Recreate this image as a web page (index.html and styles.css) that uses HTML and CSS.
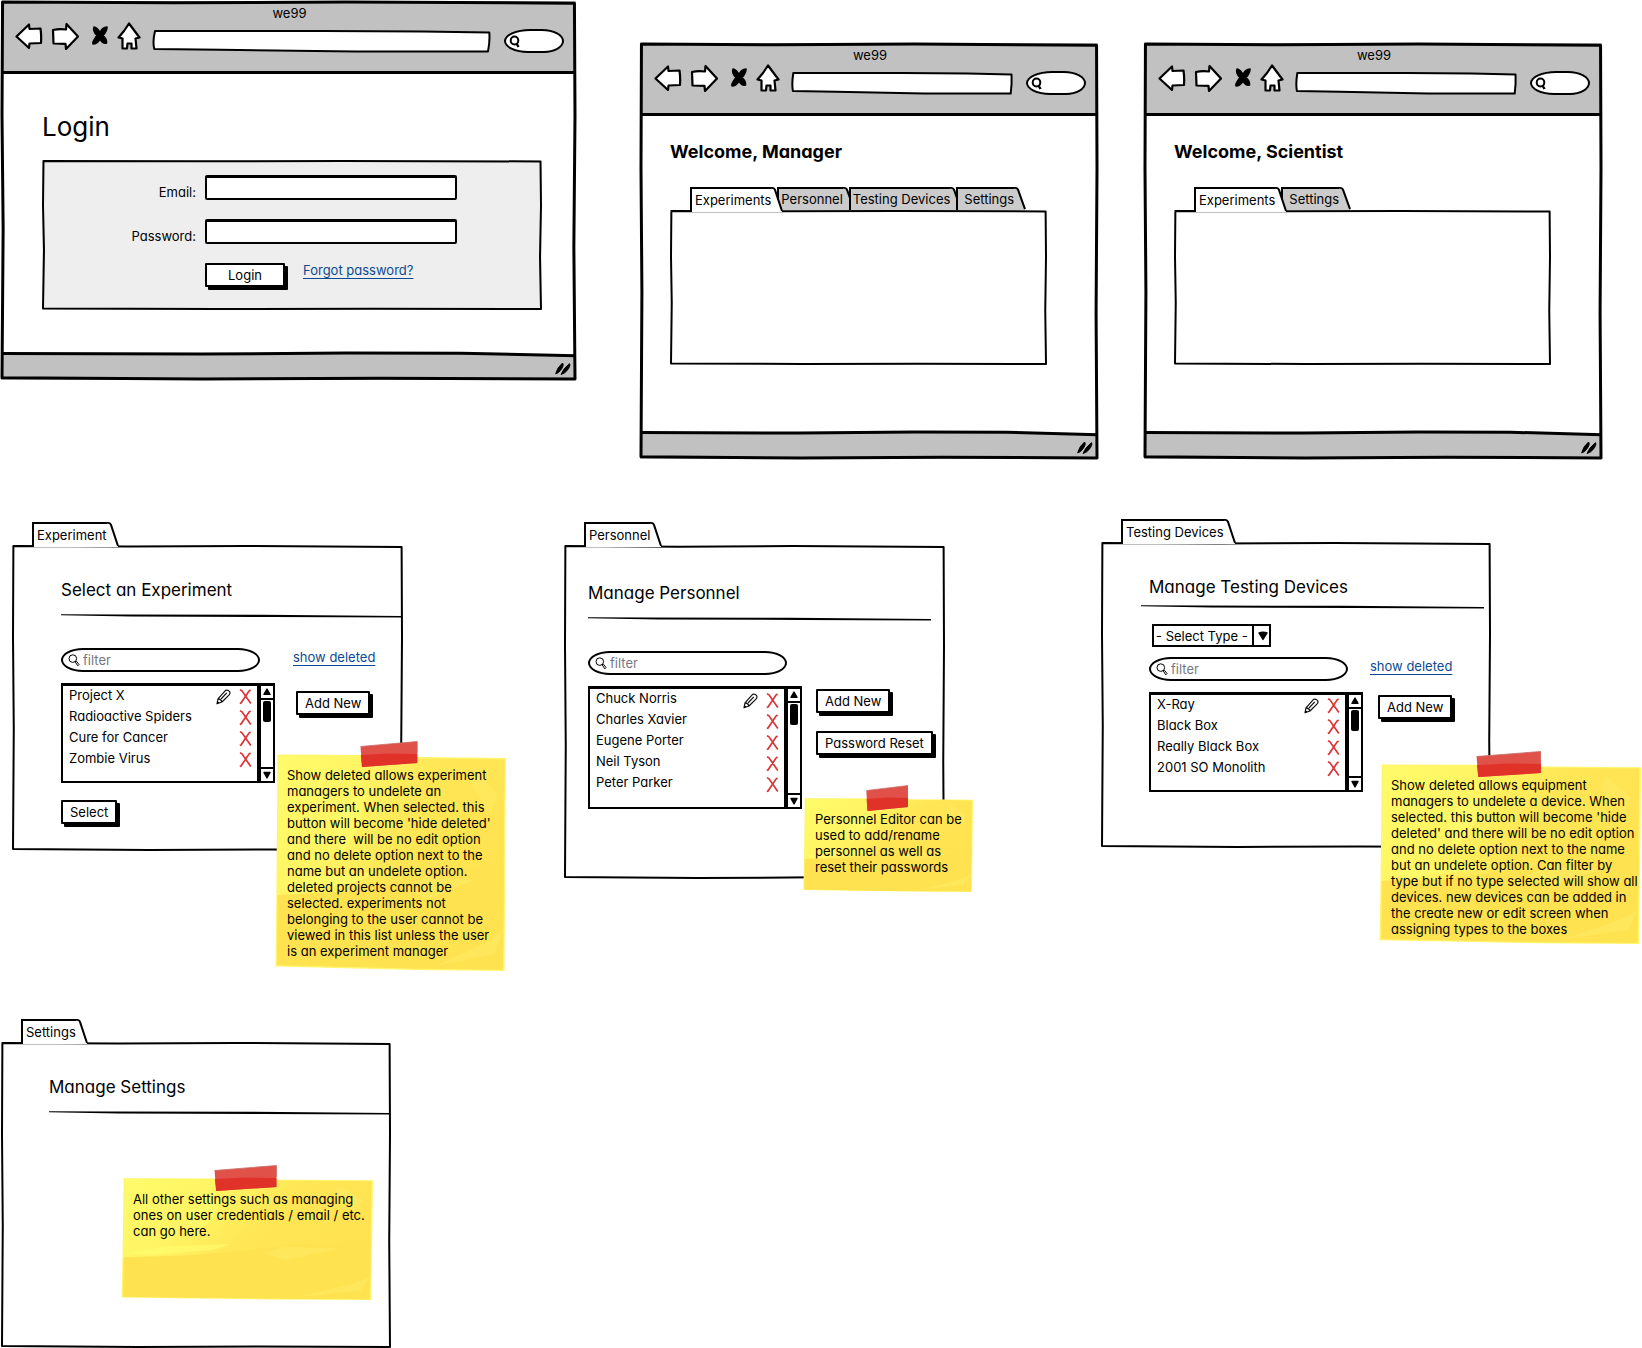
FILE: index.html
```html
<!DOCTYPE html>
<html lang="en">
<head>
<meta charset="utf-8">
<meta name="viewport" content="width=device-width, initial-scale=1">
<title>we99 wireframes</title>
<link rel="stylesheet" href="styles.css">
</head>
<body>
<svg class="defs" width="0" height="0" aria-hidden="true">
  <defs>
    <linearGradient id="paper" x1="0" y1="0" x2="1" y2="0.5">
      <stop offset="0" stop-color="#fffb6a"/>
      <stop offset="0.35" stop-color="#fff463"/>
      <stop offset="0.6" stop-color="#ffe655"/>
      <stop offset="1" stop-color="#ffe250"/>
    </linearGradient>
    <symbol id="frame" viewBox="0 0 100 100" preserveAspectRatio="none">
      <path class="ink" d="M0.1 0 L30 0.2 L60 0 L99.9 0.3 L100 30 L99.8 65 L100 100 L66 99.8 L35 100 L0 99.7 L0.2 60 L0 30 Z"/>
    </symbol>
    <symbol id="address" viewBox="0 0 100 22" preserveAspectRatio="none">
      <path class="ink" d="M0.6 1 L50 1 L80 1.6 L99.800 2.6 Q100 12 99.400 21.6 L60 21.600 L20 19.8 L0.4 19 Q-0.2 12 0.6 1 Z"/>
    </symbol>
    <symbol id="foot" viewBox="0 0 100 27" preserveAspectRatio="none">
      <path d="M0 1.500 L35 2 L60 1 L80 1.2 L100 3.5 V27 H0 Z" fill="#c1c1c1"/>
      <path class="ink" d="M0 1.500 L35 2 L60 1 L80 1.2 L100 3.5"/>
    </symbol>
    <symbol id="rule" viewBox="0 0 340 4" preserveAspectRatio="none">
      <path d="M0 0.3 L60 0.6 L200 0.8 L340 2 V3.6 L210 3 L70 2.4 L0 1.2 Z"/>
    </symbol>
    <symbol id="edge" viewBox="0 0 12 26" preserveAspectRatio="none">
      <path class="edge-fill" d="M0 1 Q3 0.6 4 3 L11 25 V26 H0 Z"/>
      <path d="M0 1 Q3 0.6 4 3 L11 25" fill="none" stroke="#000" stroke-width="2"/>
    </symbol>
    <symbol id="back" viewBox="0 0 28 28">
      <path d="M1.5 14.5 L14 2.5 L14.5 7 L25.5 6.5 Q26.5 13 26 21 L14.5 21.5 L14 26 Z" fill="#fff" stroke="#000" stroke-width="2.2" stroke-linejoin="round"/>
    </symbol>
    <symbol id="forward" viewBox="0 0 28 28">
      <path d="M27 14.5 L15.5 2 L15 7.5 Q8 6.5 2 8 L2.5 21.5 L14.5 21.8 L15 27 Z" fill="#fff" stroke="#000" stroke-width="2.2" stroke-linejoin="round"/>
    </symbol>
    <symbol id="stop" viewBox="0 0 22 28">
      <path d="M7 5 Q11 6 13 11 Q15 5 20 5 Q20 9 16 13.500 Q20 17 19.500 21 Q16 22 13 17 Q10 22 6 22 Q5 20 10 13.500 Q5.500 9 7 5 Z" stroke="#000" stroke-width="1.6" stroke-linejoin="round"/>
    </symbol>
    <symbol id="home" viewBox="0 0 24 28">
      <path d="M12 1.5 L22.5 15.5 L18.5 16.5 L19.5 26.5 H14.5 V21.5 H10.5 L10 26.5 H5.5 L5.5 16.5 L1.5 15.5 L7 9 Z" fill="#fff" stroke="#000" stroke-width="2.2" stroke-linejoin="round"/>
    </symbol>
    <symbol id="lens-bold" viewBox="0 0 12 13">
      <ellipse cx="5.5" cy="5.5" rx="3.8" ry="4" fill="none" stroke="#000" stroke-width="2"/>
      <path d="M7.5 8.5 L9.5 12" stroke="#000" stroke-width="2.4"/>
    </symbol>
    <symbol id="lens" viewBox="0 0 12 13">
      <circle cx="4.8" cy="4.6" r="3.8" fill="none" stroke="#000" stroke-width="1"/>
      <path d="M7 7.6 L8.6 7.4 L11 10.6 L9.8 11.8 Z" fill="none" stroke="#000" stroke-width="1"/>
    </symbol>
    <symbol id="pencil" viewBox="0 0 15 16">
      <path d="M1 14.8 L2 9.8 L9.6 1.4 Q12 0.6 13.6 2.6 Q14.4 4.4 13.4 5.6 L6 13 Z M2 9.8 Q5 10 6 13 M10.800 3.8 L5 10" fill="none" stroke="#111" stroke-width="1.2" stroke-linejoin="round"/>
      <path d="M1 15 L1.6 12.4 L3.6 13.6 Z"/>
    </symbol>
    <symbol id="cross" viewBox="0 0 13 16">
      <path d="M1 0.8 L3 1.8 L11.8 14.6 M11.6 1 L10 2 L2 14 L0.8 14.6" fill="none" stroke="#dc3434" stroke-width="1.7"/>
    </symbol>
    <symbol id="grip" viewBox="0 0 16 14">
      <path d="M0.6 12 Q2 5.5 7.5 1 Q9.4 2.6 6.6 7 Q3.6 11.4 0.6 12 Z M6 12.6 Q7.8 7 14.4 1.6 Q16 3 13 7.6 Q9.4 12 6 12.6 Z" stroke="#000" stroke-width="0.8"/>
    </symbol>
    <symbol id="up" viewBox="0 0 12 12">
      <path d="M6 3 L9 8.400 H3 Z" stroke="#000" stroke-width="1.4" stroke-linejoin="round"/>
    </symbol>
    <symbol id="down" viewBox="0 0 12 12">
      <path d="M6 8.800 L9 3.400 H3 Z" stroke="#000" stroke-width="1.4" stroke-linejoin="round"/>
    </symbol>
    <symbol id="sheet" viewBox="0 0 231 217" preserveAspectRatio="none">
      <path d="M2.5 0.5 L90 1 L150 3 L231 4 L229.500 217 L140 216 L0.5 212.500 L1.500 130 Z" fill="#fff56a"/>
      <path d="M4 2 L90 2 L150 4.500 L229.500 5.500 L228 215.500 L140 214.500 L2 211 L3 130 Z" fill="url(#paper)"/>
      <path d="M2.500 141 L60 138 L110 130 L150 120 L229 112 L228 215.500 L140 214.500 L2 211 Z" fill="#ffe250"/>
      <path d="M5 134 L40 122 L100 118 L84 128 L30 136 Z M60 60 L92 34 L84 72 L66 104 Z" fill="#fffc6c" opacity="0.7"/>
      <path d="M130 134 L150 122 L200 126 L180 134 L152 146 Z M200 14 L222 40 L216 62 L196 30 Z M160 212 L212 188 L228 176 L220 200 Z" fill="#ffec66" opacity="0.5"/>
    </symbol>
    <symbol id="tape" viewBox="0 0 57 26" preserveAspectRatio="none">
      <path d="M0.5 5.500 L56.500 0.5 V22 L2 26 Z" fill="#df5149"/>
      <path d="M0.8 14 L28 12.500 L56.500 13 V22 L2 26 Z" fill="#e1322a"/>
      <path d="M0.5 5.500 L56.500 0.5 V12" fill="none" stroke="#c8706a" stroke-width="0.8"/>
    </symbol>
  </defs>
</svg>

<main class="canvas">
  <div class="row row--windows">
    <section class="window window--login">
      <header class="chrome">
        <p class="chrome-title">we99</p>
        <nav class="chrome-bar">
          <button class="icon-btn" aria-label="Back"><svg width="28" height="28"><use href="#back"/></svg></button>
          <button class="icon-btn" aria-label="Forward"><svg width="28" height="28"><use href="#forward"/></svg></button>
          <button class="icon-btn" aria-label="Stop"><svg width="22" height="28"><use href="#stop"/></svg></button>
          <button class="icon-btn" aria-label="Home"><svg width="24" height="28"><use href="#home"/></svg></button>
          <label class="url"><svg><use href="#address"/></svg><input type="text" aria-label="Address"></label>
          <label class="chrome-search"><svg width="12" height="13"><use href="#lens-bold"/></svg><input type="text" aria-label="Web search"></label>
        </nav>
      </header>
      <div class="window-body">
        <h1 class="login-title">Login</h1>
        <form class="login">
          <svg class="frame"><use href="#frame"/></svg>
          <label for="email">Email:</label>
          <input class="field" id="email" type="email">
          <label for="password">Password:</label>
          <input class="field" id="password" type="password">
          <div class="login-actions">
            <button class="btn btn--login" type="button">Login</button>
            <a class="link" href="#forgot">Forgot password?</a>
          </div>
        </form>
      </div>
      <footer class="status"><svg class="status-bg"><use href="#foot"/></svg><svg class="grip" width="16" height="14"><use href="#grip"/></svg></footer>
      <svg class="frame frame--bold"><use href="#frame"/></svg>
    </section>

    <section class="window window--manager">
      <header class="chrome">
        <p class="chrome-title">we99</p>
        <nav class="chrome-bar">
          <button class="icon-btn" aria-label="Back"><svg width="28" height="28"><use href="#back"/></svg></button>
          <button class="icon-btn" aria-label="Forward"><svg width="28" height="28"><use href="#forward"/></svg></button>
          <button class="icon-btn" aria-label="Stop"><svg width="22" height="28"><use href="#stop"/></svg></button>
          <button class="icon-btn" aria-label="Home"><svg width="24" height="28"><use href="#home"/></svg></button>
          <label class="url"><svg><use href="#address"/></svg><input type="text" aria-label="Address"></label>
          <label class="chrome-search"><svg width="12" height="13"><use href="#lens-bold"/></svg><input type="text" aria-label="Web search"></label>
        </nav>
      </header>
      <div class="window-body window-body--welcome">
        <h1 class="welcome">Welcome, Manager</h1>
        <div class="tabs">
          <button class="tab tab--active"><span>Experiments</span><svg width="12" height="26"><use href="#edge"/></svg></button>
          <button class="tab"><span>Personnel</span><svg width="12" height="26"><use href="#edge"/></svg></button>
          <button class="tab"><span>Testing Devices</span><svg width="12" height="26"><use href="#edge"/></svg></button>
          <button class="tab tab--last"><span>Settings</span><svg width="12" height="26"><use href="#edge"/></svg></button>
        </div>
        <div class="panel panel--empty"><svg class="frame"><use href="#frame"/></svg></div>
      </div>
      <footer class="status"><svg class="status-bg"><use href="#foot"/></svg><svg class="grip" width="16" height="14"><use href="#grip"/></svg></footer>
      <svg class="frame frame--bold"><use href="#frame"/></svg>
    </section>

    <section class="window window--scientist">
      <header class="chrome">
        <p class="chrome-title">we99</p>
        <nav class="chrome-bar">
          <button class="icon-btn" aria-label="Back"><svg width="28" height="28"><use href="#back"/></svg></button>
          <button class="icon-btn" aria-label="Forward"><svg width="28" height="28"><use href="#forward"/></svg></button>
          <button class="icon-btn" aria-label="Stop"><svg width="22" height="28"><use href="#stop"/></svg></button>
          <button class="icon-btn" aria-label="Home"><svg width="24" height="28"><use href="#home"/></svg></button>
          <label class="url"><svg><use href="#address"/></svg><input type="text" aria-label="Address"></label>
          <label class="chrome-search"><svg width="12" height="13"><use href="#lens-bold"/></svg><input type="text" aria-label="Web search"></label>
        </nav>
      </header>
      <div class="window-body window-body--welcome">
        <h1 class="welcome">Welcome, Scientist</h1>
        <div class="tabs">
          <button class="tab tab--active"><span>Experiments</span><svg width="12" height="26"><use href="#edge"/></svg></button>
          <button class="tab tab--last"><span>Settings</span><svg width="12" height="26"><use href="#edge"/></svg></button>
        </div>
        <div class="panel panel--empty"><svg class="frame"><use href="#frame"/></svg></div>
      </div>
      <footer class="status"><svg class="status-bg"><use href="#foot"/></svg><svg class="grip" width="16" height="14"><use href="#grip"/></svg></footer>
      <svg class="frame frame--bold"><use href="#frame"/></svg>
    </section>
  </div>

  <div class="row row--boards">
    <section class="board board--experiment">
      <div class="tabs">
        <button class="tab tab--active"><span>Experiment</span><svg width="12" height="26"><use href="#edge"/></svg></button>
      </div>
      <div class="panel">
        <svg class="frame"><use href="#frame"/></svg>
        <h2>Select an Experiment</h2>
        <svg class="rule"><use href="#rule"/></svg>
        <div class="browse">
          <label class="filter"><svg width="12" height="13"><use href="#lens"/></svg><input type="text" placeholder="filter" aria-label="Filter experiments"></label>
          <a class="link" href="#deleted">show deleted</a>
          <div class="listbox">
            <ul>
              <li><span>Project X</span><button class="icon-btn" aria-label="Edit"><svg width="15" height="16"><use href="#pencil"/></svg></button><button class="icon-btn" aria-label="Delete"><svg width="13" height="16"><use href="#cross"/></svg></button></li>
              <li><span>Radioactive Spiders</span><button class="icon-btn" aria-label="Delete"><svg width="13" height="16"><use href="#cross"/></svg></button></li>
              <li><span>Cure for Cancer</span><button class="icon-btn" aria-label="Delete"><svg width="13" height="16"><use href="#cross"/></svg></button></li>
              <li><span>Zombie Virus</span><button class="icon-btn" aria-label="Delete"><svg width="13" height="16"><use href="#cross"/></svg></button></li>
            </ul>
            <div class="scroll"><svg width="12" height="12"><use href="#up"/></svg><div class="track"><div class="thumb"></div></div><svg width="12" height="12"><use href="#down"/></svg></div>
          </div>
          <div class="actions"><button class="btn">Add New</button></div>
        </div>
        <button class="btn btn--select">Select</button>
      </div>
      <aside class="note">
        <svg class="sheet"><use href="#sheet"/></svg><svg class="tape"><use href="#tape"/></svg>
        <p>Show deleted allows experiment<br>managers to undelete an<br>experiment. When selected. this<br>button will become 'hide deleted'<br>and there&nbsp; will be no edit option<br>and no delete option next to the<br>name but an undelete option.<br>deleted projects cannot be<br>selected. experiments not<br>belonging to the user cannot be<br>viewed in this list unless the user<br>is an experiment manager</p>
      </aside>
    </section>

    <section class="board board--personnel">
      <div class="tabs">
        <button class="tab tab--active"><span>Personnel</span><svg width="12" height="26"><use href="#edge"/></svg></button>
      </div>
      <div class="panel">
        <svg class="frame"><use href="#frame"/></svg>
        <h2>Manage Personnel</h2>
        <svg class="rule"><use href="#rule"/></svg>
        <div class="browse">
          <label class="filter"><svg width="12" height="13"><use href="#lens"/></svg><input type="text" placeholder="filter" aria-label="Filter personnel"></label>
          <div class="listbox">
            <ul>
              <li><span>Chuck Norris</span><button class="icon-btn" aria-label="Edit"><svg width="15" height="16"><use href="#pencil"/></svg></button><button class="icon-btn" aria-label="Delete"><svg width="13" height="16"><use href="#cross"/></svg></button></li>
              <li><span>Charles Xavier</span><button class="icon-btn" aria-label="Delete"><svg width="13" height="16"><use href="#cross"/></svg></button></li>
              <li><span>Eugene Porter</span><button class="icon-btn" aria-label="Delete"><svg width="13" height="16"><use href="#cross"/></svg></button></li>
              <li><span>Neil Tyson</span><button class="icon-btn" aria-label="Delete"><svg width="13" height="16"><use href="#cross"/></svg></button></li>
              <li><span>Peter Parker</span><button class="icon-btn" aria-label="Delete"><svg width="13" height="16"><use href="#cross"/></svg></button></li>
            </ul>
            <div class="scroll"><svg width="12" height="12"><use href="#up"/></svg><div class="track"><div class="thumb"></div></div><svg width="12" height="12"><use href="#down"/></svg></div>
          </div>
          <div class="actions"><button class="btn">Add New</button><button class="btn">Password Reset</button></div>
        </div>
      </div>
      <aside class="note">
        <svg class="sheet"><use href="#sheet"/></svg><svg class="tape"><use href="#tape"/></svg>
        <p>Personnel Editor can be<br>used to add/rename<br>personnel as well as<br>reset their passwords</p>
      </aside>
    </section>

    <section class="board board--devices">
      <div class="tabs">
        <button class="tab tab--active"><span>Testing Devices</span><svg width="12" height="26"><use href="#edge"/></svg></button>
      </div>
      <div class="panel">
        <svg class="frame"><use href="#frame"/></svg>
        <h2>Manage Testing Devices</h2>
        <svg class="rule"><use href="#rule"/></svg>
        <div class="select">
          <select aria-label="Device type"><option>- Select Type -</option></select>
          <svg width="17" height="19"><path d="M9 13.500 L5 7 Q9 5.500 13 7 Z" stroke="#000" stroke-width="1.400" stroke-linejoin="round"/></svg>
        </div>
        <div class="browse">
          <label class="filter"><svg width="12" height="13"><use href="#lens"/></svg><input type="text" placeholder="filter" aria-label="Filter devices"></label>
          <a class="link" href="#deleted">show deleted</a>
          <div class="listbox">
            <ul>
              <li><span>X-Ray</span><button class="icon-btn" aria-label="Edit"><svg width="15" height="16"><use href="#pencil"/></svg></button><button class="icon-btn" aria-label="Delete"><svg width="13" height="16"><use href="#cross"/></svg></button></li>
              <li><span>Black Box</span><button class="icon-btn" aria-label="Delete"><svg width="13" height="16"><use href="#cross"/></svg></button></li>
              <li><span>Really Black Box</span><button class="icon-btn" aria-label="Delete"><svg width="13" height="16"><use href="#cross"/></svg></button></li>
              <li><span>2001 SO Monolith</span><button class="icon-btn" aria-label="Delete"><svg width="13" height="16"><use href="#cross"/></svg></button></li>
            </ul>
            <div class="scroll"><svg width="12" height="12"><use href="#up"/></svg><div class="track"><div class="thumb"></div></div><svg width="12" height="12"><use href="#down"/></svg></div>
          </div>
          <div class="actions"><button class="btn">Add New</button></div>
        </div>
      </div>
      <aside class="note">
        <svg class="sheet"><use href="#sheet"/></svg><svg class="tape"><use href="#tape"/></svg>
        <p>Show deleted allows equipment<br>managers to undelete a device. When<br>selected. this button will become 'hide<br>deleted' and there will be no edit option<br>and no delete option next to the name<br>but an undelete option. Can filter by<br>type but if no type selected will show all<br>devices. new devices can be added in<br>the create new or edit screen when<br>assigning types to the boxes</p>
      </aside>
    </section>
  </div>

  <div class="row row--settings">
    <section class="board board--settings">
      <div class="tabs">
        <button class="tab tab--active"><span>Settings</span><svg width="12" height="26"><use href="#edge"/></svg></button>
      </div>
      <div class="panel">
        <svg class="frame"><use href="#frame"/></svg>
        <h2>Manage Settings</h2>
        <svg class="rule"><use href="#rule"/></svg>
      </div>
      <aside class="note">
        <svg class="sheet"><use href="#sheet"/></svg><svg class="tape"><use href="#tape"/></svg>
        <p>All other settings such as managing<br>ones on user credentials / email / etc.<br>can go here.</p>
      </aside>
    </section>
  </div>
</main>
</body>
</html>
```
FILE: styles.css
```css
* { box-sizing: border-box; }

body {
  margin: 0;
  background: #fff;
  color: #000;
  font: 13px/18px Inter, "Liberation Sans", sans-serif;
  font-feature-settings: "cv11";
}

h1, h2, p, ul { margin: 0; padding: 0; }
ul { list-style: none; }
svg { display: block; flex: none; }
symbol { overflow: visible; }
button, input, select { font: inherit; font-feature-settings: inherit; color: inherit; margin: 0; }
input { min-width: 0; outline: 0; }
.defs { position: absolute; }

/* Sketch primitives */
.ink { fill: none; stroke: #000; stroke-width: inherit; stroke-linejoin: round; vector-effect: non-scaling-stroke; }
.frame { position: absolute; inset: 1px; width: calc(100% - 2px); height: calc(100% - 2px); overflow: visible; pointer-events: none; stroke-width: 2px; }
.frame--bold { stroke-width: 3px; }
.rule { width: 100%; height: 4px; }
.icon-btn { display: block; flex: none; padding: 0; border: 0; background: none; }
.link { color: #0b4a92; text-decoration: underline; text-underline-offset: 3px; }

.btn {
  height: 24px;
  padding: 0 7px;
  border: 2px solid #000;
  border-radius: 1px;
  background: #fff;
  box-shadow: 3px 3px 0 #000;
  line-height: 18px;
  white-space: nowrap;
}

/* Rows of the board */
.canvas { padding-top: 1px; overflow-x: clip; }
.row { display: grid; align-items: start; }
.row--windows { grid-template-columns: 1fr 575fr 64fr 458fr 46fr 458fr 40fr; }
.row--boards { grid-template-columns: 12fr 391fr 161fr 381fr 156fr 390fr 151fr; margin-top: 60px; }
.row--settings { grid-template-columns: 1fr 390fr 1251fr; margin-top: 140px; }
.row > * { min-width: 0; }
.row > :nth-child(1) { grid-column: 2; }
.row > :nth-child(2) { grid-column: 4; }
.row > :nth-child(3) { grid-column: 6; }

/* Browser windows */
.window { position: relative; display: flex; flex-direction: column; min-height: 416px; }
.window--login { min-height: 379px; }
.window--manager, .window--scientist { margin-top: 42px; }
.chrome { height: 73px; padding: 3px 12px 0 14px; background: #c1c1c1; border-bottom: 3px solid #000; }
.chrome-title { text-align: center; }
.chrome-bar { display: flex; gap: 8px; align-items: flex-start; }
.url { position: relative; flex: 1; height: 22px; margin: 8px 6px 0 4px; background: #fff; border-radius: 4px; }
.url svg { position: absolute; inset: 0; width: 100%; height: 100%; overflow: visible; stroke-width: 2px; }
.url .ink, #address .ink { fill: #fff; }
.url { background: none; }
.url input { position: relative; width: 100%; height: 22px; padding: 0 6px; border: 0; background: none; }
.chrome-search { display: flex; align-items: center; width: 60px; height: 24px; margin-top: 7px; padding: 0 8px 0 3px; border: 2px solid #000; border-radius: 26px 22px 20px 24px / 12px 12px 12px 12px; background: #fff; }
.chrome-search input { flex: 1; border: 0; background: none; }
.window-body { flex: 1; padding: 36px 34px 24px 41px; }
.window-body--welcome { padding: 24px 51px 24px 30px; }
.status { position: relative; height: 28px; }
.status-bg { width: 100%; height: 28px; overflow: visible; stroke-width: 3px; }
.grip { position: absolute; right: 5px; bottom: 4px; }

.login-title { font-size: 26px; line-height: 34px; font-weight: 400; }
.login { position: relative; display: grid; grid-template-columns: 154px 252px; column-gap: 9px; row-gap: 18px; margin-top: 16px; padding: 15px 0 20px; background: #eee; }
.login label { padding-top: 8px; text-align: right; }
.field { height: 25px; border: 2px solid #000; border-top-width: 3px; border-radius: 2px; background: #fff; }
.login-actions { grid-column: 2; display: flex; align-items: flex-start; gap: 18px; height: 27px; }
.btn--login { width: 80px; }
.login-actions .link { line-height: 14px; white-space: nowrap; }

.welcome { font-size: 18px; line-height: 24px; font-weight: 700; }

/* Tabs and panels */
.tabs { position: relative; z-index: 1; display: flex; padding-left: 20px; }
.window-body .tabs { margin-top: 23px; }
.tab { display: flex; height: 24px; padding: 0; border: 0; background: none; text-align: left; white-space: nowrap; }
.tab span { height: 23px; padding: 1px 0 0 2px; border: solid #000; border-width: 2px 0 0 2px; background: #cbcbcb; }
.tab use { fill: #cbcbcb; }
.tab svg { height: 23px; width: 12px; }
.tab + .tab { margin-left: -6px; }
.tab--active { position: relative; z-index: 1; }
.tab--active span { height: 25px; padding: 2px 0 0 3px; background: #fff; }
.tab--active svg { height: 25px; }
.tab--active use { fill: #fff; }
.edge-fill { fill: inherit; }
.tab--last span { padding-left: 6px; }

.panel { position: relative; margin-top: -1px; }
.panel--empty { height: 155px; }

/* Folder boards */
.board { position: relative; }
.board .panel { min-height: 306px; padding-top: 33px; }
.board h2 { font-size: 17px; line-height: 24px; font-weight: 400; white-space: nowrap; }
.board .rule { margin-top: 12px; }
.board--experiment, .board--personnel { margin-top: 3px; }
.board--experiment .panel { padding-left: 49px; padding-right: 1px; }
.board--personnel .panel { min-height: 334px; padding: 36px 14px 0 24px; }
.board--devices .panel { padding-left: 48px; padding-right: 7px; }
.board--devices .rule { width: calc(100% + 8px); margin: 6px 0 0 -8px; }
.board--settings .panel { padding-left: 48px; padding-right: 1px; }

.browse { display: grid; grid-template-columns: 214px 1fr; column-gap: 18px; row-gap: 11px; margin-top: 30px; }
.filter { display: flex; align-items: center; gap: 3px; grid-column: 1; width: 199px; height: 24px; padding: 0 10px 0 5px; border: 2px solid #000; border-radius: 22px / 12px; background: #fff; }
.filter input { flex: 1; padding: 0; border: 0; background: none; }
.filter input::placeholder { color: #777780; opacity: 1; }
.listbox { grid-column: 1; display: flex; height: 100px; border: 2px solid #000; border-top-width: 3px; background: #fff; }
.listbox ul { flex: 1; }
.listbox li { display: flex; gap: 8px; height: 21px; padding: 0 5px 0 6px; }
.listbox li span { flex: 1; }
.scroll { display: flex; flex-direction: column; width: 16px; border-left: 4px solid #000; }
.track { flex: 1; border: solid #000; border-width: 2px 0; padding: 1px 2px; }
.thumb { width: 8px; height: 21px; border-radius: 2px; background: #000; }
.actions { display: flex; flex-direction: column; align-items: flex-start; gap: 18px; padding: 8px 0 0 3px; }
.btn--select { margin-top: 17px; }

.board--personnel .browse { column-gap: 14px; }
.board--personnel .listbox { height: 123px; }
.board--personnel .listbox .icon-btn { padding-top: 3px; }
.board--personnel .actions { padding: 3px 0 0; }

.select { display: flex; width: 119px; height: 23px; margin: 15px 0 10px 3px; border: 2px solid #000; background: #fff; }
.select select { flex: 1; min-width: 0; padding: 0 0 0 2px; border: 0; background: none; appearance: none; line-height: 18px; }
.select svg { border-left: 2px solid #000; }
.board--devices .browse { column-gap: 7px; margin-top: 0; }
.board--devices .actions { padding: 3px 0 0 8px; }

/* Sticky notes lie over the boards */
.note { position: absolute; z-index: 2; padding: 13px 0 13px 12px; white-space: nowrap; line-height: 16px; }
.sheet { position: absolute; inset: 0; width: 100%; height: 100%; }
.tape { position: absolute; left: 37%; top: -13px; width: 25%; height: 26px; }
.note p { position: relative; }
.board--experiment .note { left: 263px; top: 232px; width: 231px; height: 217px; }
.board--personnel .note { left: 239px; top: 276px; width: 170px; height: 94px; }
.board--devices .note { left: 278px; top: 245px; width: 262px; height: 180px; }
.board--settings .note { left: 120px; top: 159px; width: 252px; height: 122px; }
```
